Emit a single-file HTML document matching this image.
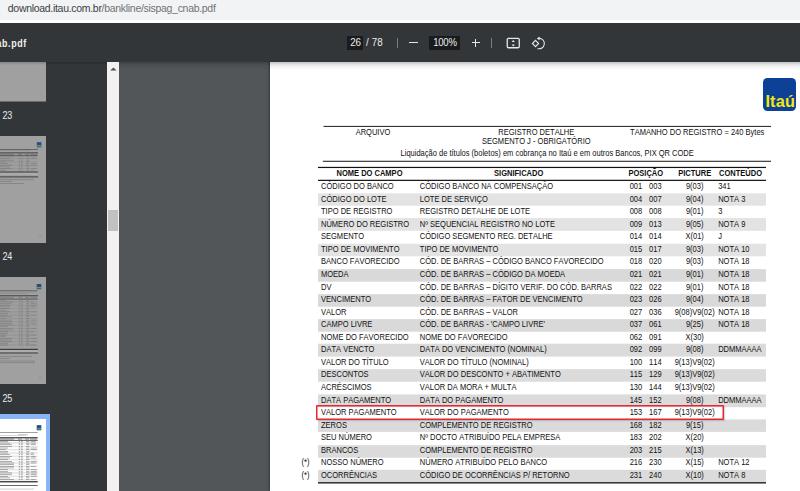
<!DOCTYPE html>
<html><head><meta charset="utf-8">
<style>
*{margin:0;padding:0;box-sizing:border-box}
html,body{width:800px;height:491px;overflow:hidden;background:#525659;font-family:"Liberation Sans",sans-serif}
.a{position:absolute}
.r{position:absolute}
.t{position:absolute;font-kerning:none;font-size:7.53px;line-height:7.5px;white-space:nowrap;color:#111;transform:scaleY(1.15);transform-origin:0 6.3px}
.b{font-weight:bold}
.c{text-align:center}
#url{position:absolute;left:0;top:0;width:800px;height:19.5px;background:#f1f3f4}
#urlw{position:absolute;left:0;top:19.5px;width:800px;height:3.3px;background:#fff}
#urltxt{position:absolute;left:7.8px;top:2px;font-size:10.5px;line-height:12px;letter-spacing:-0.3px;color:#6f7377;white-space:nowrap}
#urltxt span{color:#3c4043}
#tb{position:absolute;left:0;top:23px;width:800px;height:39px;background:#323639;z-index:5}
.tbsh{position:absolute;top:62px;height:8px;background:linear-gradient(rgba(0,0,0,.24),rgba(0,0,0,.08) 40%,rgba(0,0,0,0));z-index:4}
#side{position:absolute;left:0;top:62px;width:107px;height:429px;background:#323639}
#sb{position:absolute;left:107px;top:62px;width:12px;height:429px;background:#f1f1f1}
#page{position:absolute;left:270px;top:62px;width:530px;height:429px;background:#fff;box-shadow:-1px 0 2px rgba(0,0,0,.35)}
.thumb{position:absolute;background:#a0a0a0}
.lbl{position:absolute;font-size:9px;line-height:10px;color:#e8eaed;letter-spacing:-0.2px;transform:scaleY(1.12);transform-origin:0 8px}
</style></head><body>
<div id="url"></div><div id="urlw"></div>
<div id="urltxt"><span>download.itau.com.br</span>/bankline/sispag_cnab.pdf</div>
<div id="tb">
  <div class="a" style="right:773.4px;top:14.7px;font-size:10.3px;line-height:12px;font-weight:bold;color:#f1f1f1;white-space:nowrap;letter-spacing:0.7px;transform:scaleX(0.86);transform-origin:100% 0">sispag_cnab.pdf</div>
  <div class="a" style="left:347.2px;top:12.5px;width:15.8px;height:14.2px;background:#191b1c"></div>
  <div class="a" style="left:350.2px;top:13.6px;font-size:9.8px;line-height:11px;color:#ececec;letter-spacing:-0.2px;transform:scaleY(1.15);transform-origin:0 9px">26</div>
  <div class="a" style="left:366px;top:13.6px;font-size:9.8px;line-height:11px;color:#ececec;white-space:nowrap;letter-spacing:0.1px;transform:scaleY(1.15);transform-origin:0 9px">/ 78</div>
  <div class="a" style="left:397.2px;top:15px;width:1px;height:10px;background:#7b7e81"></div>
  <div class="a" style="left:409.4px;top:19.2px;width:8.7px;height:1.3px;background:#e6e6e6"></div>
  <div class="a" style="left:429.4px;top:12.6px;width:30.6px;height:14.2px;background:#191b1c"></div>
  <div class="a" style="left:433.3px;top:14px;font-size:9.6px;line-height:11px;color:#ececec;letter-spacing:-0.3px;transform:scaleY(1.15);transform-origin:0 9px">100%</div>
  <div class="a" style="left:471.5px;top:19.2px;width:8.7px;height:1.3px;background:#e6e6e6"></div>
  <div class="a" style="left:475.2px;top:15.7px;width:1.3px;height:8.6px;background:#e6e6e6"></div>
  <div class="a" style="left:491.2px;top:14.8px;width:1px;height:10px;background:#7b7e81"></div>
  <svg class="a" style="left:500px;top:10px" width="50" height="20" viewBox="0 0 50 20">
    <rect x="7.25" y="5.35" width="12" height="9.4" rx="1.2" fill="none" stroke="#e8e8e8" stroke-width="1.3"/>
    <path d="M13.25 7.1 L14.9 9.1 L11.6 9.1 Z" fill="#e8e8e8"/>
    <path d="M13.25 13.6 L14.9 11.6 L11.6 11.6 Z" fill="#e8e8e8"/>
    <path d="M35.5 7.4 L38.6 10.5 L35.5 13.6 L32.4 10.5 Z" fill="none" stroke="#e8e8e8" stroke-width="1.1"/>
    <path d="M39 5.2 A5.3 5.3 0 1 1 37.6 15.6" fill="none" stroke="#e8e8e8" stroke-width="1.1"/>
    <path d="M36.8 5.4 L39.6 3.6 L39.6 7.2 Z" fill="#e8e8e8"/>
  </svg>
</div>
<div id="side"></div>
<svg class="a" style="left:0;top:62px" width="46" height="40" viewBox="0 0 46 40"><rect x="0.00" y="0.00" width="46.00" height="39.50" fill="#a0a0a0"/><rect x="39.50" y="32.50" width="1.20" height="0.80" fill="#888"/></svg>
<svg class="a" style="left:0;top:135.9px" width="46" height="107" viewBox="0 0 46 107"><rect x="0.00" y="0.00" width="46.00" height="107.20" fill="#a0a0a0"/><rect x="36.80" y="6.20" width="4.60" height="5.20" fill="#1f4f8f"/><rect x="36.80" y="9.40" width="4.60" height="1.10" fill="#8fae3a"/><rect x="0.00" y="13.00" width="37.90" height="0.80" fill="#555"/><rect x="0.00" y="14.40" width="30.00" height="0.60" fill="#8a8a8a"/><rect x="0.00" y="16.40" width="38.00" height="1.00" fill="#3d3d3d"/><rect x="0.00" y="18.10" width="14.00" height="0.80" fill="#777"/><rect x="18.00" y="18.10" width="4.00" height="0.80" fill="#777"/><rect x="25.00" y="18.10" width="4.00" height="0.80" fill="#777"/><rect x="30.00" y="18.10" width="7.00" height="0.80" fill="#777"/><rect x="0.00" y="19.40" width="37.80" height="0.70" fill="#3d3d3d"/><rect x="0.00" y="20.60" width="14.00" height="0.60" fill="#777" opacity="0.85"/><rect x="18.80" y="20.60" width="1.40" height="0.60" fill="#777" opacity="0.85"/><rect x="21.00" y="20.60" width="1.80" height="0.60" fill="#777" opacity="0.85"/><rect x="26.00" y="20.60" width="3.40" height="0.60" fill="#777" opacity="0.85"/><rect x="30.80" y="20.60" width="5.00" height="0.60" fill="#777" opacity="0.85"/><rect x="0.00" y="21.76" width="37.80" height="1.66" fill="#979797"/><rect x="0.00" y="22.26" width="10.00" height="0.60" fill="#777" opacity="0.85"/><rect x="18.80" y="22.26" width="1.40" height="0.60" fill="#777" opacity="0.85"/><rect x="21.00" y="22.26" width="1.80" height="0.60" fill="#777" opacity="0.85"/><rect x="26.00" y="22.26" width="3.40" height="0.60" fill="#777" opacity="0.85"/><rect x="30.80" y="22.26" width="6.00" height="0.60" fill="#777" opacity="0.85"/><rect x="0.00" y="23.92" width="14.00" height="0.60" fill="#777" opacity="0.85"/><rect x="18.80" y="23.92" width="1.40" height="0.60" fill="#777" opacity="0.85"/><rect x="21.00" y="23.92" width="1.80" height="0.60" fill="#777" opacity="0.85"/><rect x="26.00" y="23.92" width="3.40" height="0.60" fill="#777" opacity="0.85"/><rect x="0.00" y="25.08" width="37.80" height="1.66" fill="#979797"/><rect x="0.00" y="25.58" width="6.00" height="0.60" fill="#777" opacity="0.85"/><rect x="18.80" y="25.58" width="1.40" height="0.60" fill="#777" opacity="0.85"/><rect x="21.00" y="25.58" width="1.80" height="0.60" fill="#777" opacity="0.85"/><rect x="26.00" y="25.58" width="3.40" height="0.60" fill="#777" opacity="0.85"/><rect x="0.00" y="27.24" width="8.00" height="0.60" fill="#777" opacity="0.85"/><rect x="18.80" y="27.24" width="1.40" height="0.60" fill="#777" opacity="0.85"/><rect x="21.00" y="27.24" width="1.80" height="0.60" fill="#777" opacity="0.85"/><rect x="26.00" y="27.24" width="3.40" height="0.60" fill="#777" opacity="0.85"/><rect x="30.80" y="27.24" width="6.00" height="0.60" fill="#777" opacity="0.85"/><rect x="0.00" y="28.40" width="37.80" height="1.66" fill="#979797"/><rect x="0.00" y="28.90" width="12.00" height="0.60" fill="#777" opacity="0.85"/><rect x="18.80" y="28.90" width="1.40" height="0.60" fill="#777" opacity="0.85"/><rect x="21.00" y="28.90" width="1.80" height="0.60" fill="#777" opacity="0.85"/><rect x="26.00" y="28.90" width="3.40" height="0.60" fill="#777" opacity="0.85"/><rect x="30.80" y="28.90" width="6.00" height="0.60" fill="#777" opacity="0.85"/><rect x="0.00" y="30.56" width="10.00" height="0.60" fill="#777" opacity="0.85"/><rect x="18.80" y="30.56" width="1.40" height="0.60" fill="#777" opacity="0.85"/><rect x="21.00" y="30.56" width="1.80" height="0.60" fill="#777" opacity="0.85"/><rect x="26.00" y="30.56" width="3.40" height="0.60" fill="#777" opacity="0.85"/><rect x="0.00" y="31.72" width="37.80" height="1.66" fill="#979797"/><rect x="0.00" y="32.22" width="12.00" height="0.60" fill="#777" opacity="0.85"/><rect x="18.80" y="32.22" width="1.40" height="0.60" fill="#777" opacity="0.85"/><rect x="21.00" y="32.22" width="1.80" height="0.60" fill="#777" opacity="0.85"/><rect x="26.00" y="32.22" width="3.40" height="0.60" fill="#777" opacity="0.85"/><rect x="30.80" y="32.22" width="6.00" height="0.60" fill="#777" opacity="0.85"/><rect x="0.00" y="33.88" width="6.00" height="0.60" fill="#777" opacity="0.85"/><rect x="18.80" y="33.88" width="1.40" height="0.60" fill="#777" opacity="0.85"/><rect x="21.00" y="33.88" width="1.80" height="0.60" fill="#777" opacity="0.85"/><rect x="26.00" y="33.88" width="3.40" height="0.60" fill="#777" opacity="0.85"/><rect x="30.80" y="33.88" width="3.00" height="0.60" fill="#777" opacity="0.85"/><rect x="0.00" y="35.50" width="38.00" height="1.00" fill="#3d3d3d"/><rect x="0.00" y="37.20" width="38.00" height="1.40" fill="#b0b0b0"/><rect x="0.00" y="40.40" width="38.00" height="1.00" fill="#3d3d3d"/><rect x="0.00" y="43.40" width="34.00" height="0.70" fill="#7d7d7d"/><rect x="0.00" y="45.20" width="12.00" height="0.70" fill="#7d7d7d"/><rect x="0.00" y="47.30" width="24.00" height="0.70" fill="#7d7d7d"/><rect x="39.50" y="99.00" width="1.20" height="0.80" fill="#777"/></svg>
<svg class="a" style="left:0;top:277px" width="46" height="107.2" viewBox="0 0 46 107.2"><rect x="0.00" y="0.00" width="46.00" height="107.20" fill="#a0a0a0"/><rect x="36.70" y="7.00" width="4.60" height="5.20" fill="#1f4f8f"/><rect x="36.70" y="10.20" width="4.60" height="1.10" fill="#8fae3a"/><rect x="0.00" y="13.40" width="37.50" height="0.80" fill="#555"/><rect x="0.00" y="14.80" width="37.00" height="0.60" fill="#888"/><rect x="0.00" y="16.30" width="27.00" height="0.60" fill="#888"/><rect x="0.00" y="18.30" width="38.00" height="1.00" fill="#3d3d3d"/><rect x="0.00" y="20.40" width="14.00" height="0.80" fill="#777"/><rect x="18.00" y="20.40" width="4.00" height="0.80" fill="#777"/><rect x="25.00" y="20.40" width="4.00" height="0.80" fill="#777"/><rect x="30.00" y="20.40" width="7.00" height="0.80" fill="#777"/><rect x="0.00" y="21.70" width="37.80" height="0.70" fill="#3d3d3d"/><rect x="0.00" y="22.90" width="6.00" height="0.60" fill="#777" opacity="0.85"/><rect x="18.80" y="22.90" width="1.40" height="0.60" fill="#777" opacity="0.85"/><rect x="21.00" y="22.90" width="1.80" height="0.60" fill="#777" opacity="0.85"/><rect x="26.00" y="22.90" width="3.40" height="0.60" fill="#777" opacity="0.85"/><rect x="0.00" y="24.06" width="37.80" height="1.66" fill="#979797"/><rect x="0.00" y="24.56" width="14.00" height="0.60" fill="#777" opacity="0.85"/><rect x="18.80" y="24.56" width="1.40" height="0.60" fill="#777" opacity="0.85"/><rect x="21.00" y="24.56" width="1.80" height="0.60" fill="#777" opacity="0.85"/><rect x="26.00" y="24.56" width="3.40" height="0.60" fill="#777" opacity="0.85"/><rect x="30.80" y="24.56" width="3.00" height="0.60" fill="#777" opacity="0.85"/><rect x="0.00" y="26.22" width="12.00" height="0.60" fill="#777" opacity="0.85"/><rect x="18.80" y="26.22" width="1.40" height="0.60" fill="#777" opacity="0.85"/><rect x="21.00" y="26.22" width="1.80" height="0.60" fill="#777" opacity="0.85"/><rect x="26.00" y="26.22" width="3.40" height="0.60" fill="#777" opacity="0.85"/><rect x="30.80" y="26.22" width="6.00" height="0.60" fill="#777" opacity="0.85"/><rect x="0.00" y="27.38" width="37.80" height="1.66" fill="#979797"/><rect x="0.00" y="27.88" width="10.00" height="0.60" fill="#777" opacity="0.85"/><rect x="18.80" y="27.88" width="1.40" height="0.60" fill="#777" opacity="0.85"/><rect x="21.00" y="27.88" width="1.80" height="0.60" fill="#777" opacity="0.85"/><rect x="26.00" y="27.88" width="3.40" height="0.60" fill="#777" opacity="0.85"/><rect x="30.80" y="27.88" width="6.00" height="0.60" fill="#777" opacity="0.85"/><rect x="0.00" y="29.54" width="10.00" height="0.60" fill="#777" opacity="0.85"/><rect x="18.80" y="29.54" width="1.40" height="0.60" fill="#777" opacity="0.85"/><rect x="21.00" y="29.54" width="1.80" height="0.60" fill="#777" opacity="0.85"/><rect x="26.00" y="29.54" width="3.40" height="0.60" fill="#777" opacity="0.85"/><rect x="30.80" y="29.54" width="5.00" height="0.60" fill="#777" opacity="0.85"/><rect x="0.00" y="30.70" width="37.80" height="1.66" fill="#979797"/><rect x="0.00" y="31.20" width="10.00" height="0.60" fill="#777" opacity="0.85"/><rect x="18.80" y="31.20" width="1.40" height="0.60" fill="#777" opacity="0.85"/><rect x="21.00" y="31.20" width="1.80" height="0.60" fill="#777" opacity="0.85"/><rect x="26.00" y="31.20" width="3.40" height="0.60" fill="#777" opacity="0.85"/><rect x="0.00" y="32.86" width="6.00" height="0.60" fill="#777" opacity="0.85"/><rect x="18.80" y="32.86" width="1.40" height="0.60" fill="#777" opacity="0.85"/><rect x="21.00" y="32.86" width="1.80" height="0.60" fill="#777" opacity="0.85"/><rect x="26.00" y="32.86" width="3.40" height="0.60" fill="#777" opacity="0.85"/><rect x="0.00" y="34.02" width="37.80" height="1.66" fill="#979797"/><rect x="0.00" y="34.52" width="10.00" height="0.60" fill="#777" opacity="0.85"/><rect x="18.80" y="34.52" width="1.40" height="0.60" fill="#777" opacity="0.85"/><rect x="21.00" y="34.52" width="1.80" height="0.60" fill="#777" opacity="0.85"/><rect x="26.00" y="34.52" width="3.40" height="0.60" fill="#777" opacity="0.85"/><rect x="30.80" y="34.52" width="6.00" height="0.60" fill="#777" opacity="0.85"/><rect x="0.00" y="36.18" width="8.00" height="0.60" fill="#777" opacity="0.85"/><rect x="18.80" y="36.18" width="1.40" height="0.60" fill="#777" opacity="0.85"/><rect x="21.00" y="36.18" width="1.80" height="0.60" fill="#777" opacity="0.85"/><rect x="26.00" y="36.18" width="3.40" height="0.60" fill="#777" opacity="0.85"/><rect x="0.00" y="37.34" width="37.80" height="1.66" fill="#979797"/><rect x="0.00" y="37.84" width="8.00" height="0.60" fill="#777" opacity="0.85"/><rect x="18.80" y="37.84" width="1.40" height="0.60" fill="#777" opacity="0.85"/><rect x="21.00" y="37.84" width="1.80" height="0.60" fill="#777" opacity="0.85"/><rect x="26.00" y="37.84" width="3.40" height="0.60" fill="#777" opacity="0.85"/><rect x="30.80" y="37.84" width="5.00" height="0.60" fill="#777" opacity="0.85"/><rect x="0.00" y="39.50" width="12.00" height="0.60" fill="#777" opacity="0.85"/><rect x="18.80" y="39.50" width="1.40" height="0.60" fill="#777" opacity="0.85"/><rect x="21.00" y="39.50" width="1.80" height="0.60" fill="#777" opacity="0.85"/><rect x="26.00" y="39.50" width="3.40" height="0.60" fill="#777" opacity="0.85"/><rect x="0.00" y="40.66" width="37.80" height="1.66" fill="#979797"/><rect x="0.00" y="41.16" width="6.00" height="0.60" fill="#777" opacity="0.85"/><rect x="18.80" y="41.16" width="1.40" height="0.60" fill="#777" opacity="0.85"/><rect x="21.00" y="41.16" width="1.80" height="0.60" fill="#777" opacity="0.85"/><rect x="26.00" y="41.16" width="3.40" height="0.60" fill="#777" opacity="0.85"/><rect x="0.00" y="42.82" width="12.00" height="0.60" fill="#777" opacity="0.85"/><rect x="18.80" y="42.82" width="1.40" height="0.60" fill="#777" opacity="0.85"/><rect x="21.00" y="42.82" width="1.80" height="0.60" fill="#777" opacity="0.85"/><rect x="26.00" y="42.82" width="3.40" height="0.60" fill="#777" opacity="0.85"/><rect x="30.80" y="42.82" width="6.00" height="0.60" fill="#777" opacity="0.85"/><rect x="0.00" y="43.98" width="37.80" height="1.66" fill="#979797"/><rect x="0.00" y="44.48" width="12.00" height="0.60" fill="#777" opacity="0.85"/><rect x="18.80" y="44.48" width="1.40" height="0.60" fill="#777" opacity="0.85"/><rect x="21.00" y="44.48" width="1.80" height="0.60" fill="#777" opacity="0.85"/><rect x="26.00" y="44.48" width="3.40" height="0.60" fill="#777" opacity="0.85"/><rect x="0.00" y="46.14" width="12.00" height="0.60" fill="#777" opacity="0.85"/><rect x="18.80" y="46.14" width="1.40" height="0.60" fill="#777" opacity="0.85"/><rect x="21.00" y="46.14" width="1.80" height="0.60" fill="#777" opacity="0.85"/><rect x="26.00" y="46.14" width="3.40" height="0.60" fill="#777" opacity="0.85"/><rect x="30.80" y="46.14" width="5.00" height="0.60" fill="#777" opacity="0.85"/><rect x="0.00" y="47.30" width="37.80" height="1.66" fill="#979797"/><rect x="0.00" y="47.80" width="14.00" height="0.60" fill="#777" opacity="0.85"/><rect x="18.80" y="47.80" width="1.40" height="0.60" fill="#777" opacity="0.85"/><rect x="21.00" y="47.80" width="1.80" height="0.60" fill="#777" opacity="0.85"/><rect x="26.00" y="47.80" width="3.40" height="0.60" fill="#777" opacity="0.85"/><rect x="0.00" y="49.46" width="8.00" height="0.60" fill="#777" opacity="0.85"/><rect x="18.80" y="49.46" width="1.40" height="0.60" fill="#777" opacity="0.85"/><rect x="21.00" y="49.46" width="1.80" height="0.60" fill="#777" opacity="0.85"/><rect x="26.00" y="49.46" width="3.40" height="0.60" fill="#777" opacity="0.85"/><rect x="0.00" y="50.62" width="37.80" height="1.66" fill="#979797"/><rect x="0.00" y="51.12" width="12.00" height="0.60" fill="#777" opacity="0.85"/><rect x="18.80" y="51.12" width="1.40" height="0.60" fill="#777" opacity="0.85"/><rect x="21.00" y="51.12" width="1.80" height="0.60" fill="#777" opacity="0.85"/><rect x="26.00" y="51.12" width="3.40" height="0.60" fill="#777" opacity="0.85"/><rect x="30.80" y="51.12" width="6.00" height="0.60" fill="#777" opacity="0.85"/><rect x="0.00" y="52.78" width="14.00" height="0.60" fill="#777" opacity="0.85"/><rect x="18.80" y="52.78" width="1.40" height="0.60" fill="#777" opacity="0.85"/><rect x="21.00" y="52.78" width="1.80" height="0.60" fill="#777" opacity="0.85"/><rect x="26.00" y="52.78" width="3.40" height="0.60" fill="#777" opacity="0.85"/><rect x="0.00" y="53.94" width="37.80" height="1.66" fill="#979797"/><rect x="0.00" y="54.44" width="8.00" height="0.60" fill="#777" opacity="0.85"/><rect x="18.80" y="54.44" width="1.40" height="0.60" fill="#777" opacity="0.85"/><rect x="21.00" y="54.44" width="1.80" height="0.60" fill="#777" opacity="0.85"/><rect x="26.00" y="54.44" width="3.40" height="0.60" fill="#777" opacity="0.85"/><rect x="30.80" y="54.44" width="3.00" height="0.60" fill="#777" opacity="0.85"/><rect x="0.00" y="56.10" width="8.00" height="0.60" fill="#777" opacity="0.85"/><rect x="18.80" y="56.10" width="1.40" height="0.60" fill="#777" opacity="0.85"/><rect x="21.00" y="56.10" width="1.80" height="0.60" fill="#777" opacity="0.85"/><rect x="26.00" y="56.10" width="3.40" height="0.60" fill="#777" opacity="0.85"/><rect x="0.00" y="57.26" width="37.80" height="1.66" fill="#979797"/><rect x="0.00" y="57.76" width="6.00" height="0.60" fill="#777" opacity="0.85"/><rect x="18.80" y="57.76" width="1.40" height="0.60" fill="#777" opacity="0.85"/><rect x="21.00" y="57.76" width="1.80" height="0.60" fill="#777" opacity="0.85"/><rect x="26.00" y="57.76" width="3.40" height="0.60" fill="#777" opacity="0.85"/><rect x="30.80" y="57.76" width="5.00" height="0.60" fill="#777" opacity="0.85"/><rect x="0.00" y="59.42" width="6.00" height="0.60" fill="#777" opacity="0.85"/><rect x="18.80" y="59.42" width="1.40" height="0.60" fill="#777" opacity="0.85"/><rect x="21.00" y="59.42" width="1.80" height="0.60" fill="#777" opacity="0.85"/><rect x="26.00" y="59.42" width="3.40" height="0.60" fill="#777" opacity="0.85"/><rect x="0.00" y="60.58" width="37.80" height="1.66" fill="#979797"/><rect x="0.00" y="61.08" width="12.00" height="0.60" fill="#777" opacity="0.85"/><rect x="18.80" y="61.08" width="1.40" height="0.60" fill="#777" opacity="0.85"/><rect x="21.00" y="61.08" width="1.80" height="0.60" fill="#777" opacity="0.85"/><rect x="26.00" y="61.08" width="3.40" height="0.60" fill="#777" opacity="0.85"/><rect x="30.80" y="61.08" width="6.00" height="0.60" fill="#777" opacity="0.85"/><rect x="0.00" y="62.74" width="12.00" height="0.60" fill="#777" opacity="0.85"/><rect x="18.80" y="62.74" width="1.40" height="0.60" fill="#777" opacity="0.85"/><rect x="21.00" y="62.74" width="1.80" height="0.60" fill="#777" opacity="0.85"/><rect x="26.00" y="62.74" width="3.40" height="0.60" fill="#777" opacity="0.85"/><rect x="0.00" y="63.90" width="37.80" height="1.66" fill="#979797"/><rect x="0.00" y="64.40" width="12.00" height="0.60" fill="#777" opacity="0.85"/><rect x="18.80" y="64.40" width="1.40" height="0.60" fill="#777" opacity="0.85"/><rect x="21.00" y="64.40" width="1.80" height="0.60" fill="#777" opacity="0.85"/><rect x="26.00" y="64.40" width="3.40" height="0.60" fill="#777" opacity="0.85"/><rect x="30.80" y="64.40" width="6.00" height="0.60" fill="#777" opacity="0.85"/><rect x="0.00" y="66.06" width="8.00" height="0.60" fill="#777" opacity="0.85"/><rect x="18.80" y="66.06" width="1.40" height="0.60" fill="#777" opacity="0.85"/><rect x="21.00" y="66.06" width="1.80" height="0.60" fill="#777" opacity="0.85"/><rect x="26.00" y="66.06" width="3.40" height="0.60" fill="#777" opacity="0.85"/><rect x="0.00" y="67.22" width="37.80" height="1.66" fill="#979797"/><rect x="0.00" y="67.72" width="8.00" height="0.60" fill="#777" opacity="0.85"/><rect x="18.80" y="67.72" width="1.40" height="0.60" fill="#777" opacity="0.85"/><rect x="21.00" y="67.72" width="1.80" height="0.60" fill="#777" opacity="0.85"/><rect x="26.00" y="67.72" width="3.40" height="0.60" fill="#777" opacity="0.85"/><rect x="30.80" y="67.72" width="5.00" height="0.60" fill="#777" opacity="0.85"/><rect x="0.00" y="71.80" width="38.00" height="1.20" fill="#3d3d3d"/><rect x="0.00" y="73.30" width="38.00" height="1.50" fill="#b0b0b0"/><rect x="0.00" y="75.50" width="38.00" height="1.00" fill="#3d3d3d"/><rect x="0.00" y="79.30" width="32.00" height="0.70" fill="#7d7d7d"/><rect x="0.00" y="81.30" width="10.00" height="0.70" fill="#7d7d7d"/><rect x="0.00" y="83.70" width="35.00" height="0.70" fill="#7d7d7d"/><rect x="0.00" y="85.40" width="35.00" height="0.70" fill="#7d7d7d"/><rect x="39.50" y="100.00" width="1.20" height="0.80" fill="#777"/></svg>
<div class="a" style="left:0;top:414.4px;width:49.9px;height:80px;background:#8ab4f8"></div>
<svg class="a" style="left:0;top:418.9px" width="46" height="80" viewBox="0 0 46 80"><rect x="0.00" y="0.00" width="46.00" height="80.00" fill="#ffffff"/><rect x="36.70" y="6.10" width="4.60" height="5.20" fill="#1f4f8f"/><rect x="36.70" y="9.30" width="4.60" height="1.10" fill="#8fae3a"/><rect x="0.00" y="13.10" width="37.70" height="0.70" fill="#777"/><rect x="18.00" y="15.00" width="10.00" height="0.60" fill="#aaa"/><rect x="0.00" y="16.40" width="26.00" height="0.60" fill="#bbb"/><rect x="0.00" y="18.30" width="37.70" height="1.00" fill="#111"/><rect x="0.00" y="19.60" width="14.00" height="0.80" fill="#6a6a6a"/><rect x="18.00" y="19.60" width="4.00" height="0.80" fill="#6a6a6a"/><rect x="25.00" y="19.60" width="4.00" height="0.80" fill="#6a6a6a"/><rect x="30.00" y="19.60" width="7.00" height="0.80" fill="#6a6a6a"/><rect x="0.00" y="20.90" width="37.80" height="0.70" fill="#111"/><rect x="0.00" y="22.10" width="8.00" height="0.60" fill="#6a6a6a" opacity="0.85"/><rect x="18.80" y="22.10" width="1.40" height="0.60" fill="#6a6a6a" opacity="0.85"/><rect x="21.00" y="22.10" width="1.80" height="0.60" fill="#6a6a6a" opacity="0.85"/><rect x="26.00" y="22.10" width="3.40" height="0.60" fill="#6a6a6a" opacity="0.85"/><rect x="30.80" y="22.10" width="5.00" height="0.60" fill="#6a6a6a" opacity="0.85"/><rect x="0.00" y="23.26" width="37.80" height="1.66" fill="#e6e6e6"/><rect x="0.00" y="23.76" width="10.00" height="0.60" fill="#6a6a6a" opacity="0.85"/><rect x="18.80" y="23.76" width="1.40" height="0.60" fill="#6a6a6a" opacity="0.85"/><rect x="21.00" y="23.76" width="1.80" height="0.60" fill="#6a6a6a" opacity="0.85"/><rect x="26.00" y="23.76" width="3.40" height="0.60" fill="#6a6a6a" opacity="0.85"/><rect x="30.80" y="23.76" width="5.00" height="0.60" fill="#6a6a6a" opacity="0.85"/><rect x="0.00" y="25.42" width="12.00" height="0.60" fill="#6a6a6a" opacity="0.85"/><rect x="18.80" y="25.42" width="1.40" height="0.60" fill="#6a6a6a" opacity="0.85"/><rect x="21.00" y="25.42" width="1.80" height="0.60" fill="#6a6a6a" opacity="0.85"/><rect x="26.00" y="25.42" width="3.40" height="0.60" fill="#6a6a6a" opacity="0.85"/><rect x="30.80" y="25.42" width="5.00" height="0.60" fill="#6a6a6a" opacity="0.85"/><rect x="0.00" y="26.58" width="37.80" height="1.66" fill="#e6e6e6"/><rect x="0.00" y="27.08" width="12.00" height="0.60" fill="#6a6a6a" opacity="0.85"/><rect x="18.80" y="27.08" width="1.40" height="0.60" fill="#6a6a6a" opacity="0.85"/><rect x="21.00" y="27.08" width="1.80" height="0.60" fill="#6a6a6a" opacity="0.85"/><rect x="26.00" y="27.08" width="3.40" height="0.60" fill="#6a6a6a" opacity="0.85"/><rect x="0.00" y="28.74" width="8.00" height="0.60" fill="#6a6a6a" opacity="0.85"/><rect x="18.80" y="28.74" width="1.40" height="0.60" fill="#6a6a6a" opacity="0.85"/><rect x="21.00" y="28.74" width="1.80" height="0.60" fill="#6a6a6a" opacity="0.85"/><rect x="26.00" y="28.74" width="3.40" height="0.60" fill="#6a6a6a" opacity="0.85"/><rect x="30.80" y="28.74" width="6.00" height="0.60" fill="#6a6a6a" opacity="0.85"/><rect x="0.00" y="29.90" width="37.80" height="1.66" fill="#e6e6e6"/><rect x="0.00" y="30.40" width="6.00" height="0.60" fill="#6a6a6a" opacity="0.85"/><rect x="18.80" y="30.40" width="1.40" height="0.60" fill="#6a6a6a" opacity="0.85"/><rect x="21.00" y="30.40" width="1.80" height="0.60" fill="#6a6a6a" opacity="0.85"/><rect x="26.00" y="30.40" width="3.40" height="0.60" fill="#6a6a6a" opacity="0.85"/><rect x="30.80" y="30.40" width="6.00" height="0.60" fill="#6a6a6a" opacity="0.85"/><rect x="0.00" y="32.06" width="8.00" height="0.60" fill="#6a6a6a" opacity="0.85"/><rect x="18.80" y="32.06" width="1.40" height="0.60" fill="#6a6a6a" opacity="0.85"/><rect x="21.00" y="32.06" width="1.80" height="0.60" fill="#6a6a6a" opacity="0.85"/><rect x="26.00" y="32.06" width="3.40" height="0.60" fill="#6a6a6a" opacity="0.85"/><rect x="0.00" y="33.22" width="37.80" height="1.66" fill="#e6e6e6"/><rect x="0.00" y="33.72" width="8.00" height="0.60" fill="#6a6a6a" opacity="0.85"/><rect x="18.80" y="33.72" width="1.40" height="0.60" fill="#6a6a6a" opacity="0.85"/><rect x="21.00" y="33.72" width="1.80" height="0.60" fill="#6a6a6a" opacity="0.85"/><rect x="26.00" y="33.72" width="3.40" height="0.60" fill="#6a6a6a" opacity="0.85"/><rect x="30.80" y="33.72" width="3.00" height="0.60" fill="#6a6a6a" opacity="0.85"/><rect x="0.00" y="35.38" width="10.00" height="0.60" fill="#6a6a6a" opacity="0.85"/><rect x="18.80" y="35.38" width="1.40" height="0.60" fill="#6a6a6a" opacity="0.85"/><rect x="21.00" y="35.38" width="1.80" height="0.60" fill="#6a6a6a" opacity="0.85"/><rect x="26.00" y="35.38" width="3.40" height="0.60" fill="#6a6a6a" opacity="0.85"/><rect x="30.80" y="35.38" width="3.00" height="0.60" fill="#6a6a6a" opacity="0.85"/><rect x="0.00" y="36.54" width="37.80" height="1.66" fill="#e6e6e6"/><rect x="0.00" y="37.04" width="12.00" height="0.60" fill="#6a6a6a" opacity="0.85"/><rect x="18.80" y="37.04" width="1.40" height="0.60" fill="#6a6a6a" opacity="0.85"/><rect x="21.00" y="37.04" width="1.80" height="0.60" fill="#6a6a6a" opacity="0.85"/><rect x="26.00" y="37.04" width="3.40" height="0.60" fill="#6a6a6a" opacity="0.85"/><rect x="30.80" y="37.04" width="5.00" height="0.60" fill="#6a6a6a" opacity="0.85"/><rect x="0.00" y="38.70" width="10.00" height="0.60" fill="#6a6a6a" opacity="0.85"/><rect x="18.80" y="38.70" width="1.40" height="0.60" fill="#6a6a6a" opacity="0.85"/><rect x="21.00" y="38.70" width="1.80" height="0.60" fill="#6a6a6a" opacity="0.85"/><rect x="26.00" y="38.70" width="3.40" height="0.60" fill="#6a6a6a" opacity="0.85"/><rect x="30.80" y="38.70" width="5.00" height="0.60" fill="#6a6a6a" opacity="0.85"/><rect x="0.00" y="39.86" width="37.80" height="1.66" fill="#e6e6e6"/><rect x="0.00" y="40.36" width="8.00" height="0.60" fill="#6a6a6a" opacity="0.85"/><rect x="18.80" y="40.36" width="1.40" height="0.60" fill="#6a6a6a" opacity="0.85"/><rect x="21.00" y="40.36" width="1.80" height="0.60" fill="#6a6a6a" opacity="0.85"/><rect x="26.00" y="40.36" width="3.40" height="0.60" fill="#6a6a6a" opacity="0.85"/><rect x="0.00" y="42.02" width="12.00" height="0.60" fill="#6a6a6a" opacity="0.85"/><rect x="18.80" y="42.02" width="1.40" height="0.60" fill="#6a6a6a" opacity="0.85"/><rect x="21.00" y="42.02" width="1.80" height="0.60" fill="#6a6a6a" opacity="0.85"/><rect x="26.00" y="42.02" width="3.40" height="0.60" fill="#6a6a6a" opacity="0.85"/><rect x="30.80" y="42.02" width="6.00" height="0.60" fill="#6a6a6a" opacity="0.85"/><rect x="0.00" y="43.18" width="37.80" height="1.66" fill="#e6e6e6"/><rect x="0.00" y="43.68" width="14.00" height="0.60" fill="#6a6a6a" opacity="0.85"/><rect x="18.80" y="43.68" width="1.40" height="0.60" fill="#6a6a6a" opacity="0.85"/><rect x="21.00" y="43.68" width="1.80" height="0.60" fill="#6a6a6a" opacity="0.85"/><rect x="26.00" y="43.68" width="3.40" height="0.60" fill="#6a6a6a" opacity="0.85"/><rect x="30.80" y="43.68" width="5.00" height="0.60" fill="#6a6a6a" opacity="0.85"/><rect x="0.00" y="45.34" width="14.00" height="0.60" fill="#6a6a6a" opacity="0.85"/><rect x="18.80" y="45.34" width="1.40" height="0.60" fill="#6a6a6a" opacity="0.85"/><rect x="21.00" y="45.34" width="1.80" height="0.60" fill="#6a6a6a" opacity="0.85"/><rect x="26.00" y="45.34" width="3.40" height="0.60" fill="#6a6a6a" opacity="0.85"/><rect x="0.00" y="46.50" width="37.80" height="1.66" fill="#e6e6e6"/><rect x="0.00" y="47.00" width="14.00" height="0.60" fill="#6a6a6a" opacity="0.85"/><rect x="18.80" y="47.00" width="1.40" height="0.60" fill="#6a6a6a" opacity="0.85"/><rect x="21.00" y="47.00" width="1.80" height="0.60" fill="#6a6a6a" opacity="0.85"/><rect x="26.00" y="47.00" width="3.40" height="0.60" fill="#6a6a6a" opacity="0.85"/><rect x="30.80" y="47.00" width="5.00" height="0.60" fill="#6a6a6a" opacity="0.85"/><rect x="0.00" y="48.66" width="14.00" height="0.60" fill="#6a6a6a" opacity="0.85"/><rect x="18.80" y="48.66" width="1.40" height="0.60" fill="#6a6a6a" opacity="0.85"/><rect x="21.00" y="48.66" width="1.80" height="0.60" fill="#6a6a6a" opacity="0.85"/><rect x="26.00" y="48.66" width="3.40" height="0.60" fill="#6a6a6a" opacity="0.85"/><rect x="0.00" y="49.82" width="37.80" height="1.66" fill="#e6e6e6"/><rect x="0.00" y="50.32" width="8.00" height="0.60" fill="#6a6a6a" opacity="0.85"/><rect x="18.80" y="50.32" width="1.40" height="0.60" fill="#6a6a6a" opacity="0.85"/><rect x="21.00" y="50.32" width="1.80" height="0.60" fill="#6a6a6a" opacity="0.85"/><rect x="26.00" y="50.32" width="3.40" height="0.60" fill="#6a6a6a" opacity="0.85"/><rect x="30.80" y="50.32" width="6.00" height="0.60" fill="#6a6a6a" opacity="0.85"/><rect x="0.00" y="51.98" width="8.00" height="0.60" fill="#6a6a6a" opacity="0.85"/><rect x="18.80" y="51.98" width="1.40" height="0.60" fill="#6a6a6a" opacity="0.85"/><rect x="21.00" y="51.98" width="1.80" height="0.60" fill="#6a6a6a" opacity="0.85"/><rect x="26.00" y="51.98" width="3.40" height="0.60" fill="#6a6a6a" opacity="0.85"/><rect x="30.80" y="51.98" width="6.00" height="0.60" fill="#6a6a6a" opacity="0.85"/><rect x="0.00" y="53.14" width="37.80" height="1.66" fill="#e6e6e6"/><rect x="0.00" y="53.64" width="12.00" height="0.60" fill="#6a6a6a" opacity="0.85"/><rect x="18.80" y="53.64" width="1.40" height="0.60" fill="#6a6a6a" opacity="0.85"/><rect x="21.00" y="53.64" width="1.80" height="0.60" fill="#6a6a6a" opacity="0.85"/><rect x="26.00" y="53.64" width="3.40" height="0.60" fill="#6a6a6a" opacity="0.85"/><rect x="30.80" y="53.64" width="6.00" height="0.60" fill="#6a6a6a" opacity="0.85"/><rect x="0.00" y="55.30" width="12.00" height="0.60" fill="#6a6a6a" opacity="0.85"/><rect x="18.80" y="55.30" width="1.40" height="0.60" fill="#6a6a6a" opacity="0.85"/><rect x="21.00" y="55.30" width="1.80" height="0.60" fill="#6a6a6a" opacity="0.85"/><rect x="26.00" y="55.30" width="3.40" height="0.60" fill="#6a6a6a" opacity="0.85"/><rect x="30.80" y="55.30" width="6.00" height="0.60" fill="#6a6a6a" opacity="0.85"/><rect x="0.00" y="56.46" width="37.80" height="1.66" fill="#e6e6e6"/><rect x="0.00" y="56.96" width="8.00" height="0.60" fill="#6a6a6a" opacity="0.85"/><rect x="18.80" y="56.96" width="1.40" height="0.60" fill="#6a6a6a" opacity="0.85"/><rect x="21.00" y="56.96" width="1.80" height="0.60" fill="#6a6a6a" opacity="0.85"/><rect x="26.00" y="56.96" width="3.40" height="0.60" fill="#6a6a6a" opacity="0.85"/><rect x="30.80" y="56.96" width="6.00" height="0.60" fill="#6a6a6a" opacity="0.85"/><rect x="0.00" y="58.62" width="10.00" height="0.60" fill="#6a6a6a" opacity="0.85"/><rect x="18.80" y="58.62" width="1.40" height="0.60" fill="#6a6a6a" opacity="0.85"/><rect x="21.00" y="58.62" width="1.80" height="0.60" fill="#6a6a6a" opacity="0.85"/><rect x="26.00" y="58.62" width="3.40" height="0.60" fill="#6a6a6a" opacity="0.85"/><rect x="0.00" y="59.78" width="37.80" height="1.66" fill="#e6e6e6"/><rect x="0.00" y="60.28" width="14.00" height="0.60" fill="#6a6a6a" opacity="0.85"/><rect x="18.80" y="60.28" width="1.40" height="0.60" fill="#6a6a6a" opacity="0.85"/><rect x="21.00" y="60.28" width="1.80" height="0.60" fill="#6a6a6a" opacity="0.85"/><rect x="26.00" y="60.28" width="3.40" height="0.60" fill="#6a6a6a" opacity="0.85"/><rect x="30.80" y="60.28" width="5.00" height="0.60" fill="#6a6a6a" opacity="0.85"/><rect x="0.00" y="62.10" width="37.70" height="1.30" fill="#333"/><rect x="0.00" y="66.10" width="37.70" height="0.90" fill="#555"/><rect x="0.00" y="69.70" width="34.00" height="0.70" fill="#bbb"/></svg>
<div class="lbl" style="left:2.4px;top:110.5px">23</div>
<div class="lbl" style="left:2.4px;top:251.8px">24</div>
<div class="lbl" style="left:2.4px;top:393.5px">25</div>
<div id="sb">
  <svg class="a" style="left:0;top:3px" width="12" height="8" viewBox="0 0 12 8"><path d="M3.2 5.6 L6.4 2.6 L9.6 5.6 Z" fill="#505050"/></svg>
  <div class="a" style="left:1.2px;top:148px;width:9.8px;height:20.6px;background:#c1c1c1"></div>
</div>
<div id="page"></div>
<div class="tbsh" style="left:119px;width:681px"></div>
<div class="a" style="left:763.2px;top:77.8px;width:33.2px;height:33.4px;background:#0d4195;border-radius:4.5px"></div>
<div class="a" style="left:765.4px;top:92px;font-size:16.3px;line-height:18px;font-weight:bold;color:#f4e811;letter-spacing:0.2px">Itaú</div>
<div class="a" style="left:0;top:62px;width:107px;height:3px;background:linear-gradient(rgba(0,0,0,.18),rgba(0,0,0,0));z-index:4"></div>
<svg class="a" style="left:0;top:0" width="800" height="491" viewBox="0 0 800 491"><rect x="323.50" y="125.90" width="447.50" height="1.00" fill="#1e1e1e"/><rect x="322.80" y="160.75" width="448.20" height="1.10" fill="#2a2a2a"/><rect x="318.00" y="166.85" width="448.00" height="1.20" fill="#111"/><rect x="318.00" y="179.75" width="448.00" height="1.20" fill="#111"/><rect x="318" y="193.37" width="448" height="12.33" fill="#e3e3e3"/><rect x="318" y="218.10" width="448" height="12.70" fill="#e3e3e3"/><rect x="318" y="243.70" width="448" height="12.60" fill="#e3e3e3"/><rect x="318" y="269.15" width="448" height="12.55" fill="#d9d9d9"/><rect x="318" y="294.15" width="448" height="12.55" fill="#d9d9d9"/><rect x="318" y="319.15" width="448" height="12.55" fill="#d9d9d9"/><rect x="318" y="343.70" width="448" height="12.90" fill="#dbdbdb"/><rect x="318" y="369.15" width="448" height="12.55" fill="#dbdbdb"/><rect x="318" y="394.40" width="448" height="12.80" fill="#dbdbdb"/><rect x="318" y="419.40" width="448" height="12.50" fill="#dbdbdb"/><rect x="318" y="445.15" width="448" height="12.55" fill="#dbdbdb"/><rect x="318" y="469.80" width="448" height="12.20" fill="#dbdbdb"/><rect x="318.00" y="482.00" width="448.00" height="1.60" fill="#3a3a3a"/></svg>
<div class="t c" style="left:273.00px;top:129.40px;width:200px">ARQUIVO</div>
<div class="t c" style="left:436.30px;top:129.40px;width:200px">REGISTRO DETALHE</div>
<div class="t c" style="left:597.20px;top:129.40px;width:200px">TAMANHO DO REGISTRO = 240 Bytes</div>
<div class="t c" style="left:436.30px;top:138.40px;width:200px">SEGMENTO J - OBRIGATÓRIO</div>
<div class="t c" style="left:347.20px;top:150.40px;width:400px">Liquidação de títulos (boletos) em cobrança no Itaú e em outros Bancos, PIX QR CODE</div>
<div class="t b c" style="left:309.50px;top:169.80px;width:120px">NOME DO CAMPO</div>
<div class="t b c" style="left:458.70px;top:169.80px;width:120px">SIGNIFICADO</div>
<div class="t b c" style="left:585.80px;top:169.80px;width:120px">POSIÇÃO</div>
<div class="t b c" style="left:634.70px;top:169.80px;width:120px">PICTURE</div>
<div class="t b c" style="left:680.50px;top:169.80px;width:120px">CONTEÚDO</div>
<div class="t" style="left:321.00px;top:183.00px">CÓDIGO DO BANCO</div>
<div class="t" style="left:419.80px;top:183.00px">CÓDIGO BANCO NA COMPENSAÇÃO</div>
<div class="t" style="left:629.70px;top:183.00px">001</div>
<div class="t" style="left:649.10px;top:183.00px">003</div>
<div class="t c" style="left:664.70px;top:183.00px;width:60px">9(03)</div>
<div class="t" style="left:718.20px;top:183.00px">341</div>
<div class="t" style="left:321.00px;top:195.56px">CÓDIGO DO LOTE</div>
<div class="t" style="left:419.80px;top:195.56px">LOTE DE SERVIÇO</div>
<div class="t" style="left:629.70px;top:195.56px">004</div>
<div class="t" style="left:649.10px;top:195.56px">007</div>
<div class="t c" style="left:664.70px;top:195.56px;width:60px">9(04)</div>
<div class="t" style="left:718.20px;top:195.56px">NOTA 3</div>
<div class="t" style="left:321.00px;top:208.13px">TIPO DE REGISTRO</div>
<div class="t" style="left:419.80px;top:208.13px">REGISTRO DETALHE DE LOTE</div>
<div class="t" style="left:629.70px;top:208.13px">008</div>
<div class="t" style="left:649.10px;top:208.13px">008</div>
<div class="t c" style="left:664.70px;top:208.13px;width:60px">9(01)</div>
<div class="t" style="left:718.20px;top:208.13px">3</div>
<div class="t" style="left:321.00px;top:220.69px">NÚMERO DO REGISTRO</div>
<div class="t" style="left:419.80px;top:220.69px">Nº SEQUENCIAL REGISTRO NO LOTE</div>
<div class="t" style="left:629.70px;top:220.69px">009</div>
<div class="t" style="left:649.10px;top:220.69px">013</div>
<div class="t c" style="left:664.70px;top:220.69px;width:60px">9(05)</div>
<div class="t" style="left:718.20px;top:220.69px">NOTA 9</div>
<div class="t" style="left:321.00px;top:233.26px">SEGMENTO</div>
<div class="t" style="left:419.80px;top:233.26px">CÓDIGO SEGMENTO REG. DETALHE</div>
<div class="t" style="left:629.70px;top:233.26px">014</div>
<div class="t" style="left:649.10px;top:233.26px">014</div>
<div class="t c" style="left:664.70px;top:233.26px;width:60px">X(01)</div>
<div class="t" style="left:718.20px;top:233.26px">J</div>
<div class="t" style="left:321.00px;top:245.82px">TIPO DE MOVIMENTO</div>
<div class="t" style="left:419.80px;top:245.82px">TIPO DE MOVIMENTO</div>
<div class="t" style="left:629.70px;top:245.82px">015</div>
<div class="t" style="left:649.10px;top:245.82px">017</div>
<div class="t c" style="left:664.70px;top:245.82px;width:60px">9(03)</div>
<div class="t" style="left:718.20px;top:245.82px">NOTA 10</div>
<div class="t" style="left:321.00px;top:258.39px">BANCO FAVORECIDO</div>
<div class="t" style="left:419.80px;top:258.39px">CÓD. DE BARRAS – CÓDIGO BANCO FAVORECIDO</div>
<div class="t" style="left:629.70px;top:258.39px">018</div>
<div class="t" style="left:649.10px;top:258.39px">020</div>
<div class="t c" style="left:664.70px;top:258.39px;width:60px">9(03)</div>
<div class="t" style="left:718.20px;top:258.39px">NOTA 18</div>
<div class="t" style="left:321.00px;top:270.95px">MOEDA</div>
<div class="t" style="left:419.80px;top:270.95px">CÓD. DE BARRAS – CÓDIGO DA MOEDA</div>
<div class="t" style="left:629.70px;top:270.95px">021</div>
<div class="t" style="left:649.10px;top:270.95px">021</div>
<div class="t c" style="left:664.70px;top:270.95px;width:60px">9(01)</div>
<div class="t" style="left:718.20px;top:270.95px">NOTA 18</div>
<div class="t" style="left:321.00px;top:283.52px">DV</div>
<div class="t" style="left:419.80px;top:283.52px">CÓD. DE BARRAS – DÍGITO VERIF. DO CÓD. BARRAS</div>
<div class="t" style="left:629.70px;top:283.52px">022</div>
<div class="t" style="left:649.10px;top:283.52px">022</div>
<div class="t c" style="left:664.70px;top:283.52px;width:60px">9(01)</div>
<div class="t" style="left:718.20px;top:283.52px">NOTA 18</div>
<div class="t" style="left:321.00px;top:296.08px">VENCIMENTO</div>
<div class="t" style="left:419.80px;top:296.08px">CÓD. DE BARRAS – FATOR DE VENCIMENTO</div>
<div class="t" style="left:629.70px;top:296.08px">023</div>
<div class="t" style="left:649.10px;top:296.08px">026</div>
<div class="t c" style="left:664.70px;top:296.08px;width:60px">9(04)</div>
<div class="t" style="left:718.20px;top:296.08px">NOTA 18</div>
<div class="t" style="left:321.00px;top:308.65px">VALOR</div>
<div class="t" style="left:419.80px;top:308.65px">CÓD. DE BARRAS – VALOR</div>
<div class="t" style="left:629.70px;top:308.65px">027</div>
<div class="t" style="left:649.10px;top:308.65px">036</div>
<div class="t c" style="left:664.70px;top:308.65px;width:60px">9(08)V9(02)</div>
<div class="t" style="left:718.20px;top:308.65px">NOTA 18</div>
<div class="t" style="left:321.00px;top:321.21px">CAMPO LIVRE</div>
<div class="t" style="left:419.80px;top:321.21px">CÓD. DE BARRAS - &#39;CAMPO LIVRE&#39;</div>
<div class="t" style="left:629.70px;top:321.21px">037</div>
<div class="t" style="left:649.10px;top:321.21px">061</div>
<div class="t c" style="left:664.70px;top:321.21px;width:60px">9(25)</div>
<div class="t" style="left:718.20px;top:321.21px">NOTA 18</div>
<div class="t" style="left:321.00px;top:333.78px">NOME DO FAVORECIDO</div>
<div class="t" style="left:419.80px;top:333.78px">NOME DO FAVORECIDO</div>
<div class="t" style="left:629.70px;top:333.78px">062</div>
<div class="t" style="left:649.10px;top:333.78px">091</div>
<div class="t c" style="left:664.70px;top:333.78px;width:60px">X(30)</div>
<div class="t" style="left:321.00px;top:346.34px">DATA VENCTO</div>
<div class="t" style="left:419.80px;top:346.34px">DATA DO VENCIMENTO (NOMINAL)</div>
<div class="t" style="left:629.70px;top:346.34px">092</div>
<div class="t" style="left:649.10px;top:346.34px">099</div>
<div class="t c" style="left:664.70px;top:346.34px;width:60px">9(08)</div>
<div class="t" style="left:718.20px;top:346.34px">DDMMAAAA</div>
<div class="t" style="left:321.00px;top:358.91px">VALOR DO TÍTULO</div>
<div class="t" style="left:419.80px;top:358.91px">VALOR DO TÍTULO (NOMINAL)</div>
<div class="t" style="left:629.70px;top:358.91px">100</div>
<div class="t" style="left:649.10px;top:358.91px">114</div>
<div class="t c" style="left:664.70px;top:358.91px;width:60px">9(13)V9(02)</div>
<div class="t" style="left:321.00px;top:371.47px">DESCONTOS</div>
<div class="t" style="left:419.80px;top:371.47px">VALOR DO DESCONTO + ABATIMENTO</div>
<div class="t" style="left:629.70px;top:371.47px">115</div>
<div class="t" style="left:649.10px;top:371.47px">129</div>
<div class="t c" style="left:664.70px;top:371.47px;width:60px">9(13)V9(02)</div>
<div class="t" style="left:321.00px;top:384.04px">ACRÉSCIMOS</div>
<div class="t" style="left:419.80px;top:384.04px">VALOR DA MORA + MULTA</div>
<div class="t" style="left:629.70px;top:384.04px">130</div>
<div class="t" style="left:649.10px;top:384.04px">144</div>
<div class="t c" style="left:664.70px;top:384.04px;width:60px">9(13)V9(02)</div>
<div class="t" style="left:321.00px;top:396.60px">DATA PAGAMENTO</div>
<div class="t" style="left:419.80px;top:396.60px">DATA DO PAGAMENTO</div>
<div class="t" style="left:629.70px;top:396.60px">145</div>
<div class="t" style="left:649.10px;top:396.60px">152</div>
<div class="t c" style="left:664.70px;top:396.60px;width:60px">9(08)</div>
<div class="t" style="left:718.20px;top:396.60px">DDMMAAAA</div>
<div class="t" style="left:321.00px;top:409.17px">VALOR PAGAMENTO</div>
<div class="t" style="left:419.80px;top:409.17px">VALOR DO PAGAMENTO</div>
<div class="t" style="left:629.70px;top:409.17px">153</div>
<div class="t" style="left:649.10px;top:409.17px">167</div>
<div class="t c" style="left:664.70px;top:409.17px;width:60px">9(13)V9(02)</div>
<div class="t" style="left:321.00px;top:421.73px">ZEROS</div>
<div class="t" style="left:419.80px;top:421.73px">COMPLEMENTO DE REGISTRO</div>
<div class="t" style="left:629.70px;top:421.73px">168</div>
<div class="t" style="left:649.10px;top:421.73px">182</div>
<div class="t c" style="left:664.70px;top:421.73px;width:60px">9(15)</div>
<div class="t" style="left:321.00px;top:434.30px">SEU NÚMERO</div>
<div class="t" style="left:419.80px;top:434.30px">Nº DOCTO ATRIBUÍDO PELA EMPRESA</div>
<div class="t" style="left:629.70px;top:434.30px">183</div>
<div class="t" style="left:649.10px;top:434.30px">202</div>
<div class="t c" style="left:664.70px;top:434.30px;width:60px">X(20)</div>
<div class="t" style="left:321.00px;top:446.87px">BRANCOS</div>
<div class="t" style="left:419.80px;top:446.87px">COMPLEMENTO DE REGISTRO</div>
<div class="t" style="left:629.70px;top:446.87px">203</div>
<div class="t" style="left:649.10px;top:446.87px">215</div>
<div class="t c" style="left:664.70px;top:446.87px;width:60px">X(13)</div>
<div class="t" style="left:321.00px;top:459.43px">NOSSO NÚMERO</div>
<div class="t" style="left:419.80px;top:459.43px">NÚMERO ATRIBUÍDO PELO BANCO</div>
<div class="t" style="left:629.70px;top:459.43px">216</div>
<div class="t" style="left:649.10px;top:459.43px">230</div>
<div class="t c" style="left:664.70px;top:459.43px;width:60px">X(15)</div>
<div class="t" style="left:718.20px;top:459.43px">NOTA 12</div>
<div class="t" style="left:301.60px;top:459.43px">(*)</div>
<div class="t" style="left:321.00px;top:472.00px">OCORRÊNCIAS</div>
<div class="t" style="left:419.80px;top:472.00px">CÓDIGO DE OCORRÊNCIAS P/ RETORNO</div>
<div class="t" style="left:629.70px;top:472.00px">231</div>
<div class="t" style="left:649.10px;top:472.00px">240</div>
<div class="t c" style="left:664.70px;top:472.00px;width:60px">X(10)</div>
<div class="t" style="left:718.20px;top:472.00px">NOTA 8</div>
<div class="t" style="left:301.60px;top:472.00px">(*)</div>
<div class="r" style="left:316px;top:405.3px;width:408px;height:15.2px;border-radius:1px;box-shadow:inset 0 0 0 1.5px #e4282e,1px 1px 1.5px rgba(0,0,0,.18)"></div>
</body></html>
